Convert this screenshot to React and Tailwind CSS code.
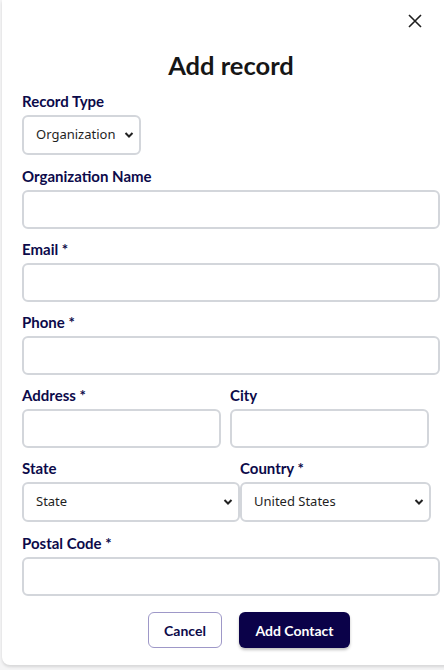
import React from 'react';

const label = "block text-[15px] leading-5 font-bold text-[#0c0a4a] mb-1";
const input = "block h-[39px] border-2 border-[#d3d6db] rounded-md bg-white px-3 text-[14px] outline-none";
const select = "h-10 border-2 border-[#d3d6db] rounded-md bg-white pl-3 pr-5 text-[13px] text-[#1f1f1f] appearance-none outline-none";

function Chevron() {
  return (
    <svg className="absolute right-[7px] top-1/2 -translate-y-1/2 pointer-events-none" width="10" height="7" viewBox="0 0 10 7">
      <path d="M1.5 1.5 L5 5 L8.5 1.5" fill="none" stroke="#222" strokeWidth="2" />
    </svg>
  );
}

function Select({ value, options, className }) {
  return (
    <div className={`relative ${className}`}>
      <select defaultValue={value} className={`${select} w-full`} style={{ fontFamily: '"Noto Sans", sans-serif' }}>
        {options.map((o) => <option key={o}>{o}</option>)}
      </select>
      <Chevron />
    </div>
  );
}

export default function App() {
  return (
    <div className="w-[444px] h-[670px] overflow-hidden bg-[#f4f4f5]" style={{ fontFamily: 'Lato, "Noto Sans", sans-serif' }}>
      <div className="relative ml-[2px] w-[458px] h-[665px] bg-white rounded-b-lg shadow-[0_2px_3px_rgba(0,0,0,0.12)] px-5">
        <button className="absolute left-[403px] top-[11px] p-[3px]">
          <svg width="14" height="14" viewBox="0 0 14 14">
            <path d="M1 1 L13 13 M13 1 L1 13" stroke="#1f1f1f" strokeWidth="1.6" />
          </svg>
        </button>

        <h1 className="pt-[49px] text-center text-[25.5px] leading-8 font-bold text-[#161616]">Add record</h1>

        <div className="mt-[10px]">
          <label className={label}>Record Type</label>
          <Select value="Organization" options={['Organization', 'Person']} className="w-[119px]" />
        </div>

        <div className="mt-[11px]">
          <label className={label}>Organization Name</label>
          <input className={`${input} w-[418px]`} />
        </div>

        <div className="mt-[10px]">
          <label className={label}>Email *</label>
          <input className={`${input} w-[418px]`} />
        </div>

        <div className="mt-[10px]">
          <label className={label}>Phone *</label>
          <input className={`${input} w-[418px]`} />
        </div>

        <div className="mt-[10px] flex gap-[9px]">
          <div>
            <label className={label}>Address *</label>
            <input className={`${input} w-[199px]`} />
          </div>
          <div>
            <label className={label}>City</label>
            <input className={`${input} w-[199px]`} />
          </div>
        </div>

        <div className="mt-[10px] flex">
          <div>
            <label className={label}>State</label>
            <Select value="State" options={['State', 'California', 'New York']} className="w-[218px]" />
          </div>
          <div>
            <label className={label}>Country *</label>
            <Select value="United States" options={['United States', 'Canada']} className="w-[191px]" />
          </div>
        </div>

        <div className="mt-[11px]">
          <label className={label}>Postal Code *</label>
          <input className={`${input} w-[418px]`} />
        </div>

        <div className="mt-4 flex gap-[17px] pl-[126px]">
          <button className="h-9 w-[74px] rounded-md border border-[#9e98c8] bg-white text-[14px] font-bold text-[#0c0a4a]">Cancel</button>
          <button className="h-9 w-[111px] rounded-md bg-[#0b0249] text-[14px] font-bold text-white shadow-[0_2px_3px_rgba(0,0,0,0.25)]">Add Contact</button>
        </div>
      </div>
    </div>
  );
}
